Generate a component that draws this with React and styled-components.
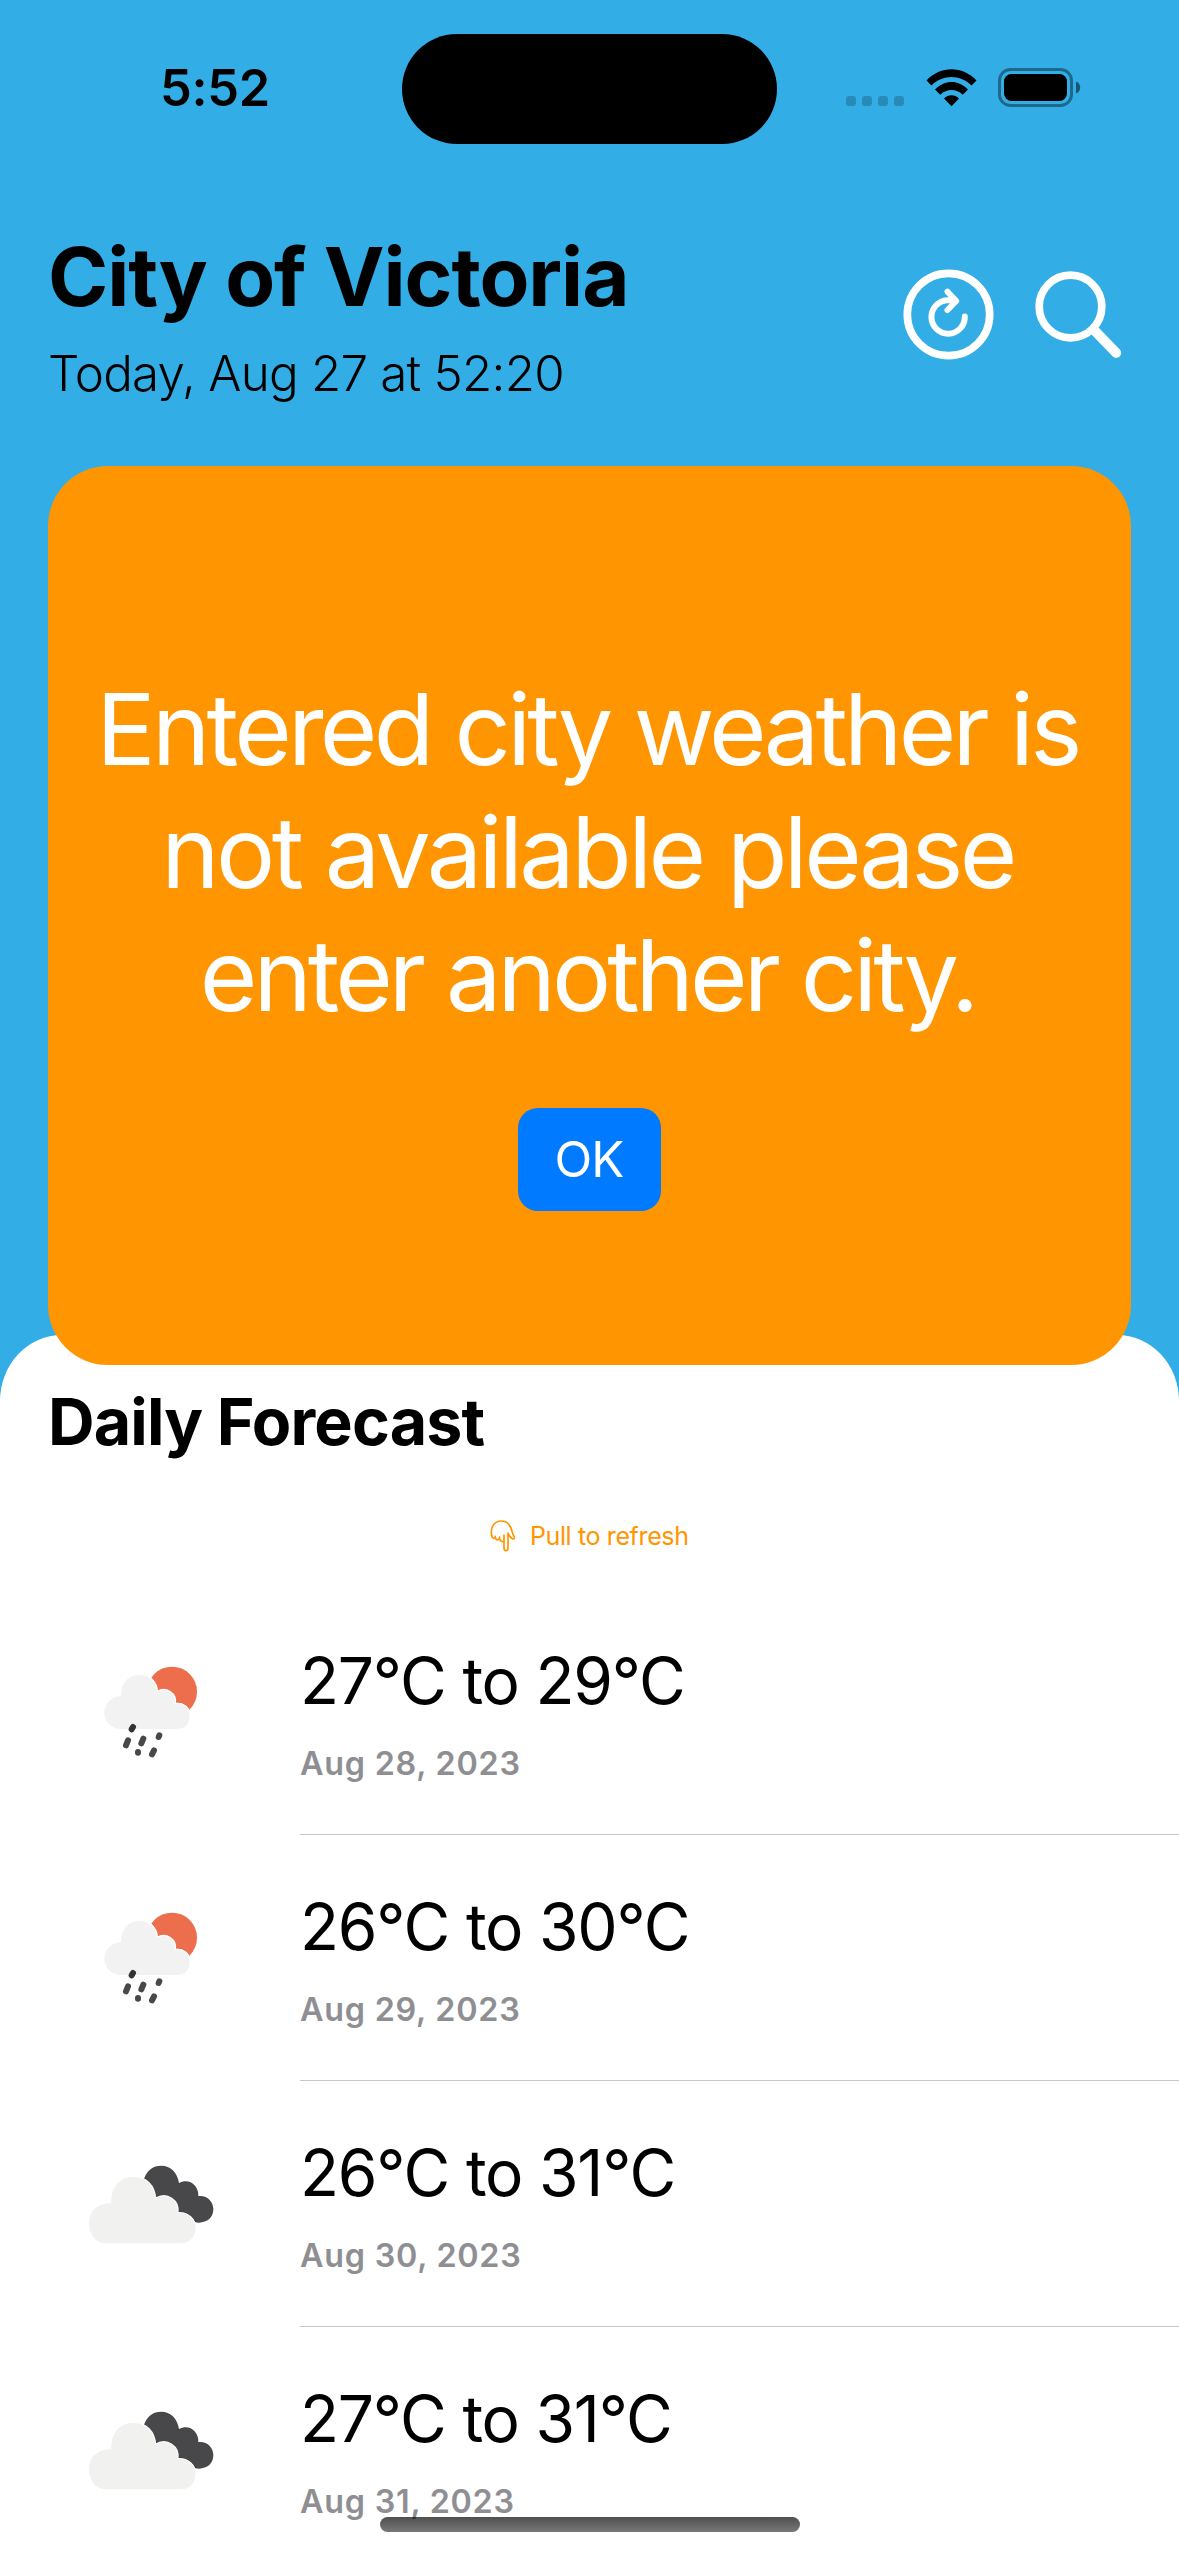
import React from "react";
import styled, { createGlobalStyle } from "styled-components";

const GlobalStyle = createGlobalStyle`
  * { box-sizing: border-box; }
  html, body { margin: 0; padding: 0; background: #fff; }
  body { font-family: Inter, "Liberation Sans", sans-serif; color: #000; }
`;

const Screen = styled.main`
  position: relative;
  display: flex;
  flex-direction: column;
  width: 1179px;
  height: 2556px;
  overflow: hidden;
  background: #32ade6;
`;

const StatusBar = styled.div`
  display: grid;
  grid-template-columns: 402px 375px 402px;
  height: 178px;
  padding-top: 34px;
  align-items: start;
`;

const Clock = styled.time`
  padding: 23px 0 0 160px;
  font-size: 50.5px;
  line-height: 62px;
  font-weight: 600;
  letter-spacing: -0.3px;
`;

const Island = styled.div`
  height: 110px;
  border-radius: 55px;
  background: #000;
`;

const StatusIcons = styled.div`
  display: flex;
  align-items: flex-end;
  height: 73px;
  padding-left: 69px;
`;

const Signal = styled.div`
  display: flex;
  gap: 6px;
  margin: 0 21.5px 1px 0;
`;

const SignalDot = styled.span`
  width: 10px;
  height: 10px;
  border-radius: 3px;
  background: rgba(0, 0, 0, 0.2);
`;

const Wifi = styled.svg`
  flex: none;
  width: 51px;
  height: 38px;
  margin-right: 21.5px;
`;

const Header = styled.header`
  display: flex;
  justify-content: space-between;
  align-items: center;
  height: 177px;
  margin: 48px 56px 63px 48px;
`;

const City = styled.h1`
  margin: 0 0 16px;
  font-size: 81.5px;
  line-height: 100px;
  font-weight: 700;
  letter-spacing: -1.05px;
`;

const Today = styled.p`
  margin: 0;
  font-size: 49.3px;
  line-height: 60px;
  font-weight: 300;
  letter-spacing: -0.78px;
`;

const Actions = styled.div`
  display: flex;
  align-items: center;
  gap: 41px;
`;

const IconButton = styled.button`
  display: block;
  padding: 0;
  border: 0;
  background: none;
  color: #fff;
  svg { display: block; }
`;

const Alert = styled.section`
  position: relative;
  z-index: 1;
  display: flex;
  flex-direction: column;
  align-items: center;
  flex: none;
  height: 899px;
  margin: 0 48px -30px;
  padding-top: 202px;
  border-radius: 60px;
  background: #ff9500;
`;

const Message = styled.p`
  margin: 0 0 71px;
  color: #fff;
  font-size: 98.8px;
  line-height: 123px;
  text-align: center;
  text-indent: -4px;
  white-space: nowrap;
`;

const Line = styled.span`
  display: block;
  letter-spacing: ${(p) => p.$tracking};
`;

const OkButton = styled.button`
  width: 143px;
  height: 103px;
  padding: 0;
  border: 0;
  border-radius: 20px;
  background: #007aff;
  color: #fff;
  font: 400 49.3px/103px Inter, "Liberation Sans", sans-serif;
  letter-spacing: -1px;
  text-indent: -1px;
`;

const Sheet = styled.section`
  flex: 1;
  min-height: 0;
  padding-top: 46.5px;
  border-radius: 62px 62px 0 0 / 66px 66px 0 0;
  background: #fff;
`;

const SheetTitle = styled.h2`
  margin: 0 0 58px 48px;
  font-size: 64.5px;
  line-height: 80px;
  font-weight: 700;
  letter-spacing: -0.85px;
`;

const PullHint = styled.div`
  display: flex;
  justify-content: center;
  align-items: center;
  gap: 13.5px;
  height: 32px;
  margin-bottom: 37.5px;
  color: #ff9500;
  font-size: 25px;
  line-height: 32px;
  letter-spacing: -0.37px;
  svg { display: block; }
`;

const List = styled.ul`
  margin: 0;
  padding: 0;
  list-style: none;
`;

const Row = styled.li`
  display: flex;
  height: 246px;
  padding-left: 70px;
`;

const WeatherIcon = styled.svg`
  flex: none;
  width: 180px;
  height: 140px;
  margin: 51px 50px 0 0;
`;

const RowBody = styled.div`
  flex: 1;
  padding-top: 51.5px;
  border-bottom: 1px solid #c6c6c8;
`;

const Temps = styled.div`
  margin-bottom: 23px;
  font-size: 64px;
  line-height: 80px;
  letter-spacing: -1.2px;
`;

const DateText = styled.div`
  font-size: 32.3px;
  line-height: 40px;
  font-weight: 600;
  letter-spacing: 0.76px;
  color: #8e8e93;
`;

const HomeIndicator = styled.div`
  position: absolute;
  left: 380px;
  bottom: 24px;
  width: 420px;
  height: 15px;
  border-radius: 7.5px;
  background: linear-gradient(rgba(0, 0, 0, 0.69), rgba(0, 0, 0, 0.53));
`;

const WifiIcon = () => (
  <Wifi viewBox="0 0 51 38">
    <path d="M0.5 11.5C14.5-3.5 36.5-3.5 50.5 11.5L45.5 16.5C34.5 5 16.5 5 5.500 16.500Z" />
    <path d="M9 20.500C18.500 10.500 32.500 10.500 42 20.500L36.700 25.700C30.500 19.500 20.500 19.500 14.300 25.700Z" />
    <path d="M18 29.500C22.500 25.300 28.500 25.300 33 29.500L25.500 37.200Z" />
  </Wifi>
);

const BatteryIcon = () => (
  <svg width="84" height="39" viewBox="0 0 84 39">
    <rect x="1.5" y="1.5" width="72" height="36" rx="11" fill="none" stroke="#000" strokeOpacity="0.4" strokeWidth="3" />
    <rect x="6" y="6" width="63" height="27" rx="7.5" />
    <path d="M78 13.500C81 14.700 82.200 17 82.200 19.500S81 24.300 78 25.500Z" fillOpacity="0.5" />
  </svg>
);

const RefreshIcon = () => (
  <svg width="91" height="91" viewBox="0 0 91 91" fill="none" stroke="currentColor" strokeLinecap="round" strokeLinejoin="round">
    <circle cx="45.5" cy="45.5" r="41.2" strokeWidth="7.7" />
    <path d="M61.800 47.500A16.700 16.700 0 1 1 45.200 31.300L52 31.300" strokeWidth="6" />
    <path d="M44.500 22.800L53.200 32L44.500 41" strokeWidth="6" />
  </svg>
);

const SearchIcon = () => (
  <svg width="88" height="88" viewBox="0 0 88 88" fill="none" stroke="currentColor" strokeLinecap="round">
    <circle cx="35.5" cy="35.5" r="31.3" strokeWidth="7.7" />
    <path d="M60 60L81.300 82" strokeWidth="9.8" />
  </svg>
);

const HandIcon = () => (
  <svg width="26" height="34" viewBox="0 0 78 102" fill="none" stroke="currentColor" strokeWidth="5" strokeLinejoin="round" strokeLinecap="round">
    <path d="M5 50C1 26 10 6 35 6C56 6 63 22 67 40C69 48 75 55 73 58C68 63 59 54 54 42L54 88C53 97 42 97 42 88L42 48" />
    <path d="M5 50C7 60 16 61 16 52M16 55C18 65 28 65 29 54M29 60C31 68 39 70 42 66" />
  </svg>
);

const RainIcon = () => (
  <WeatherIcon viewBox="0 0 540 420">
    <circle cx="306" cy="155" r="75" fill="#ec6e4c" />
    <path d="M246 116Q258 130 263 154Q304 137 317 188Q342 186 357 211" fill="none" stroke="#e6432a" strokeWidth="5" />
    <path d="M150 267A49 49 0 1 1 154 169C151 133 173 105 207 105C239 105 259 125 261 157C288 140 319 161 314 192C340 188 360 205 359 232C358 255 342 267 320 267Z" fill="#fff" stroke="#fff" strokeWidth="8" />
    <path d="M150 267A49 49 0 1 1 154 169C151 133 173 105 207 105C239 105 259 125 261 157C288 140 319 161 314 192C340 188 360 205 359 232C358 255 342 267 320 267Z" fill="#f2f2f2" />
    <g stroke="#48484a" strokeWidth="18" strokeLinecap="round">
      <path d="M189 261L185 268" stroke="#333335" />
      <path d="M174 301L168 316M220 296L214 310M268 286L266 291M204 336L204 338M252 331L246 343" />
    </g>
  </WeatherIcon>
);

const CloudIcon = () => (
  <WeatherIcon viewBox="0 0 540 420">
    <g transform="translate(0 24)">
      <path d="M222 116C232 90 250 77 273 77C303 77 322 98 327 129C356 113 387 135 385 168C412 165 430 184 430 208C430 232 412 248 387 248L372 246L320 220L255 174Z" fill="#48484a" />
      <path d="M222 118Q247 132 257 174Q316 155 323 216Q355 216 377 246" fill="none" stroke="#2b2b2d" strokeWidth="5" />
      <path d="M109 310C77 310 57 286 57 250C57 211 85 190 124 190C122 140 150 111 189 111C229 111 253 137 256 176C291 155 328 181 323 219C353 216 377 237 377 267C375 292 358 310 331 310Z" fill="#fff" stroke="#fff" strokeWidth="6" />
      <path d="M109 310C77 310 57 286 57 250C57 211 85 190 124 190C122 140 150 111 189 111C229 111 253 137 256 176C291 155 328 181 323 219C353 216 377 237 377 267C375 292 358 310 331 310Z" fill="#f1f1f0" />
    </g>
  </WeatherIcon>
);

const messageLines = [
  { text: "Entered city weather is", tracking: "-3.75px" },
  { text: "not available please", tracking: "-3.55px" },
  { text: "enter another city.", tracking: "-3.95px" },
];

const days = [
  { icon: RainIcon, temps: "27°C to 29°C", date: "Aug 28, 2023" },
  { icon: RainIcon, temps: "26°C to 30°C", date: "Aug 29, 2023" },
  { icon: CloudIcon, temps: "26°C to 31°C", date: "Aug 30, 2023" },
  { icon: CloudIcon, temps: "27°C to 31°C", date: "Aug 31, 2023" },
];

export default function App() {
  return (
    <>
      <GlobalStyle />
      <Screen>
        <StatusBar>
          <Clock>5:52</Clock>
          <Island />
          <StatusIcons>
            <Signal>
              <SignalDot />
              <SignalDot />
              <SignalDot />
              <SignalDot />
            </Signal>
            <WifiIcon />
            <BatteryIcon />
          </StatusIcons>
        </StatusBar>
        <Header>
          <div>
            <City>City of Victoria</City>
            <Today>Today, Aug 27 at 52:20</Today>
          </div>
          <Actions>
            <IconButton aria-label="Refresh"><RefreshIcon /></IconButton>
            <IconButton aria-label="Search"><SearchIcon /></IconButton>
          </Actions>
        </Header>
        <Alert>
          <Message>
            {messageLines.map(({ text, tracking }) => (
              <Line key={text} $tracking={tracking}>{text}</Line>
            ))}
          </Message>
          <OkButton>OK</OkButton>
        </Alert>
        <Sheet>
          <SheetTitle>Daily Forecast</SheetTitle>
          <PullHint>
            <HandIcon />
            Pull to refresh
          </PullHint>
          <List>
            {days.map(({ icon: Icon, temps, date }) => (
              <Row key={date}>
                <Icon />
                <RowBody>
                  <Temps>{temps}</Temps>
                  <DateText>{date}</DateText>
                </RowBody>
              </Row>
            ))}
          </List>
        </Sheet>
        <HomeIndicator />
      </Screen>
    </>
  );
}
